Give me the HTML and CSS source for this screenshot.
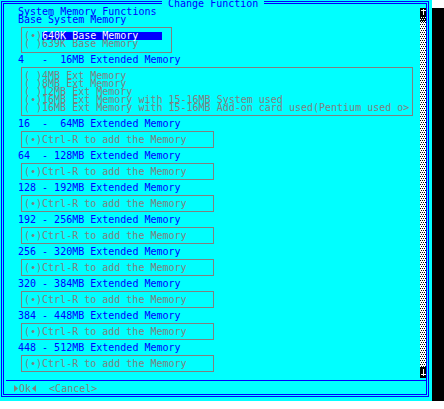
FILE: index.html
```html
<!DOCTYPE html>
<html>
<head>
<meta charset="utf-8">
<title>Change Function</title>
<link rel="stylesheet" href="styles.css">
</head>
<body>
<div class="window">
  <div class="title"> Change Function </div>
  <div class="frame">
    <div class="body">
      <div class="content">
        <div class="line">System Memory Functions</div>
        <div class="line">Base System Memory</div>
        <div class="box box-base">
          <div class="opt">(∙)<span class="hl">640K Base Memory</span></div>
          <div class="opt">( )639K Base Memory</div>
        </div>
        <div class="line label">4   -  16MB Extended Memory</div>
        <div class="box box-ext">
          <div class="opt">( )4MB Ext Memory</div>
          <div class="opt">( )8MB Ext Memory</div>
          <div class="opt">( )12MB Ext Memory</div>
          <div class="opt">(∙)16MB Ext Memory with 15-16MB System used</div>
          <div class="opt">( )16MB Ext Memory with 15-16MB Add-on card used(Pentium used o&gt;</div>
        </div>
        <div class="line label sec">16  -  64MB Extended Memory</div>
        <div class="box box-add"><div class="opt">(∙)Ctrl-R to add the Memory</div></div>
        <div class="line label sec">64  - 128MB Extended Memory</div>
        <div class="box box-add"><div class="opt">(∙)Ctrl-R to add the Memory</div></div>
        <div class="line label sec">128 - 192MB Extended Memory</div>
        <div class="box box-add"><div class="opt">(∙)Ctrl-R to add the Memory</div></div>
        <div class="line label sec">192 - 256MB Extended Memory</div>
        <div class="box box-add"><div class="opt">(∙)Ctrl-R to add the Memory</div></div>
        <div class="line label sec">256 - 320MB Extended Memory</div>
        <div class="box box-add"><div class="opt">(∙)Ctrl-R to add the Memory</div></div>
        <div class="line label sec">320 - 384MB Extended Memory</div>
        <div class="box box-add"><div class="opt">(∙)Ctrl-R to add the Memory</div></div>
        <div class="line label sec">384 - 448MB Extended Memory</div>
        <div class="box box-add"><div class="opt">(∙)Ctrl-R to add the Memory</div></div>
        <div class="line label sec">448 - 512MB Extended Memory</div>
        <div class="box box-add"><div class="opt">(∙)Ctrl-R to add the Memory</div></div>
      </div>
      <svg class="scroll" width="6" height="370" viewBox="0 0 6 370" shape-rendering="crispEdges">
        <defs>
          <pattern id="light" width="2" height="4" patternUnits="userSpaceOnUse">
            <rect width="2" height="4" fill="#fff"/>
            <rect x="0" y="0" width="1" height="1" fill="#000"/>
            <rect x="1" y="2" width="1" height="1" fill="#000"/>
          </pattern>
          <pattern id="dark" width="2" height="4" patternUnits="userSpaceOnUse">
            <rect width="2" height="4" fill="#000"/>
            <rect x="1" y="1" width="1" height="1" fill="#fff"/>
            <rect x="0" y="3" width="1" height="1" fill="#fff"/>
          </pattern>
        </defs>
        <rect x="0" y="0" width="6" height="8" fill="#000"/>
        <rect x="3" y="1" width="1" height="6" fill="#fff"/>
        <rect x="1" y="2" width="5" height="1" fill="#fff"/>
        <rect x="0" y="8" width="6" height="6" fill="url(#dark)"/>
        <rect x="0" y="14" width="6" height="345" fill="url(#light)"/>
        <rect x="0" y="359" width="6" height="11" fill="#000"/>
        <rect x="3" y="361" width="1" height="6" fill="#fff"/>
        <rect x="1" y="366" width="5" height="1" fill="#fff"/>
        <rect x="3" y="367" width="1" height="1" fill="#fff"/>
      </svg>
    </div>
    <div class="sep"></div>
    <div class="buttons"><svg class="tri" width="6" height="8" viewBox="0 0 6 8"><polygon points="1,0 5,3.5 1,7" fill="#808080"/></svg>Ok<svg class="tri" width="6" height="8" viewBox="0 0 6 8"><polygon points="5,0 1,3.5 5,7" fill="#808080"/></svg>  &lt;Cancel&gt;</div>
  </div>
</div>
</body>
</html>
```

FILE: styles.css
```css
html, body {
  margin: 0;
  padding: 0;
}

body {
  background: #ffffff;
  font-family: "DejaVu Sans Mono", "Liberation Mono", monospace;
  font-size: 10px;
  line-height: 8px;
}

.window {
  position: relative;
  box-sizing: border-box;
  width: 432px;
  height: 401px;
  padding: 1px 0 0 1px;
  background: #00ffff;
  box-shadow: 12px 8px 0 #000000;
}

.title {
  position: absolute;
  left: 162px;
  top: 0;
  height: 8px;
  background: #00ffff;
  color: #0000ff;
  white-space: pre;
}

.frame {
  box-sizing: border-box;
  width: 428px;
  height: 396px;
  border: 3px double #0000ff;
  display: flex;
  flex-direction: column;
}

.body {
  display: flex;
  height: 376px;
  flex: none;
}

.content {
  flex: 1;
  min-width: 0;
  padding: 4px 0 0 14px;
  overflow: hidden;
}

.scroll {
  display: block;
  flex: none;
  width: 6px;
  height: 370px;
  margin-top: 4px;
}

.line {
  height: 8px;
  white-space: pre;
  color: #0000ff;
}

.label {
  margin-top: 3px;
}

.label.sec {
  margin-top: 4px;
}

.box {
  box-sizing: border-box;
  margin: 3px 0 0 3px;
  border: 1px solid #808080;
  padding: 4px 0 3px 2px;
  color: #808080;
}

.box-base {
  width: 151px;
  padding-bottom: 4px;
}

.box-ext {
  width: 392px;
}

.box-add {
  width: 193px;
}

.opt {
  height: 8px;
  white-space: pre;
}

.hl {
  display: inline-block;
  vertical-align: top;
  width: 120px;
  height: 8px;
  background: #0000ff;
  color: #ffffff;
}

.sep {
  flex: none;
  height: 1px;
  margin-left: 2px;
  background: #0000ff;
}

.buttons {
  flex: none;
  height: 8px;
  padding: 4px 0 0 9px;
  color: #808080;
  white-space: pre;
}

.tri {
  display: inline-block;
  vertical-align: top;
  width: 6px;
  height: 8px;
}
```
